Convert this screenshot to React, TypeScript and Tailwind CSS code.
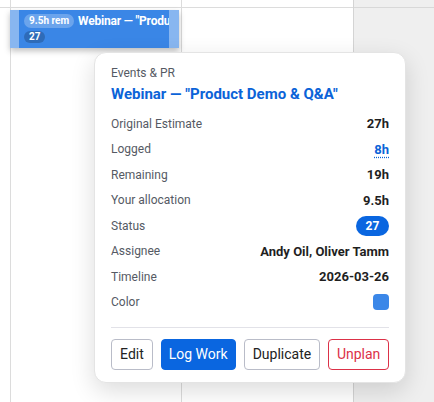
import React from "react";

const V = "font-bold text-[13px] text-[#1f1f1f]";

const rows: { label: string; value: React.ReactNode }[] = [
  { label: "Original Estimate", value: <span className={V}>27h</span> },
  {
    label: "Logged",
    value: (
      <span className="text-[13px] font-bold text-[#0b63d8] underline decoration-dotted decoration-[#0b63d8] underline-offset-[3px]">
        8h
      </span>
    ),
  },
  { label: "Remaining", value: <span className={V}>19h</span> },
  { label: "Your allocation", value: <span className={V}>9.5h</span> },
  {
    label: "Status",
    value: (
      <span className="inline-flex h-[20px] w-[33px] items-center justify-center rounded-full bg-[#0a66e0] text-[12px] font-bold text-white">
        27
      </span>
    ),
  },
  { label: "Assignee", value: <span className={V}>Andy Oil, Oliver Tamm</span> },
  { label: "Timeline", value: <span className={V}>2026-03-26</span> },
  {
    label: "Color",
    value: <span className="block h-[16px] w-[16px] rounded-[4px] bg-[#3b87e8]" />,
  },
];

export default function App() {
  return (
    <div
      className="relative h-[402px] w-[434px] overflow-hidden bg-white"
      style={{ fontFamily: "Roboto, 'Liberation Sans', sans-serif" }}
    >
      {/* calendar grid */}
      <div className="flex h-full">
        <div className="flex w-[11px] flex-col border-r border-[#dcdcdc]">
          <div className="h-[8px] border-b border-[#dcdcdc]" />
        </div>
        <div className="flex w-[171px] flex-col border-r border-[#dcdcdc]">
          <div className="h-[8px] border-b border-[#dcdcdc]" />
        </div>
        <div className="flex w-[172px] flex-col border-r border-[#d4d4d4]">
          <div className="h-[8px] border-b border-[#dcdcdc]" />
        </div>
        <div className="flex flex-1 flex-col bg-[#efefef]">
          <div className="h-[8px] border-b border-[#d8d8d8]" />
        </div>
      </div>

      {/* event bar */}
      <div className="absolute left-[10px] top-[10px] flex h-[38px] w-[169px] overflow-hidden bg-[#3a86e6] shadow-[0_3px_6px_rgba(0,0,0,0.25)]">
        <div className="w-[9px] shrink-0 bg-white/40" />
        <div className="flex min-w-0 flex-1 flex-col gap-[3px] overflow-hidden pl-[5px] pt-[4px]">
          <div className="flex items-center gap-[4px] whitespace-nowrap">
            <span className="inline-flex h-[14px] items-center rounded-full bg-white/25 px-[5px] text-[10px] font-bold leading-none text-white">
              9.5h rem
            </span>
            <span className="text-[12px] font-bold leading-none tracking-[-0.2px] text-white">
              Webinar — "Product Demo &amp; Q&amp;A"
            </span>
          </div>
          <div className="flex">
            <span className="inline-flex h-[12px] items-center rounded-full bg-black/20 px-[5px] text-[10px] font-bold leading-none text-white">
              27
            </span>
          </div>
        </div>
        <div className="w-[10px] shrink-0 bg-white/40" />
      </div>

      {/* popover */}
      <div className="absolute left-[94px] top-[52px] w-[312px] rounded-[12px] border border-[#e4e4e4] bg-white px-[16px] pb-[12px] pt-[12px] shadow-[0_8px_24px_rgba(0,0,0,0.14)]">
        <div className="text-[12px] leading-[16px] text-[#555a64]">Events &amp; PR</div>
        <div className="mt-[3px] text-[15px] font-bold leading-[20px] text-[#0b63d8]">
          Webinar — "Product Demo &amp; Q&amp;A"
        </div>
        <div className="mt-[7px] flex flex-col">
          {rows.map((r) => (
            <div key={r.label} className="flex h-[25.5px] items-center justify-between text-[12px]">
              <span className="text-[#555a64]">{r.label}</span>
              {r.value}
            </div>
          ))}
        </div>
        <div className="mt-[12px] border-t border-[#e2e2e8]" />
        <div className="mt-[11px] flex gap-[8px] whitespace-nowrap">
          <button className="h-[31px] w-[42px] rounded-[4px] border border-[#b9bcc8] bg-white text-[14px] text-[#222]">
            Edit
          </button>
          <button className="h-[31px] w-[75px] rounded-[4px] border border-[#0a66e0] bg-[#0a66e0] text-[14px] text-white">
            Log Work
          </button>
          <button className="h-[31px] w-[77px] rounded-[4px] border border-[#b9bcc8] bg-white text-[14px] text-[#222]">
            Duplicate
          </button>
          <button className="h-[31px] w-[61px] rounded-[4px] border border-[#dc3148] bg-white text-[14px] text-[#dc3148]">
            Unplan
          </button>
        </div>
      </div>
    </div>
  );
}
